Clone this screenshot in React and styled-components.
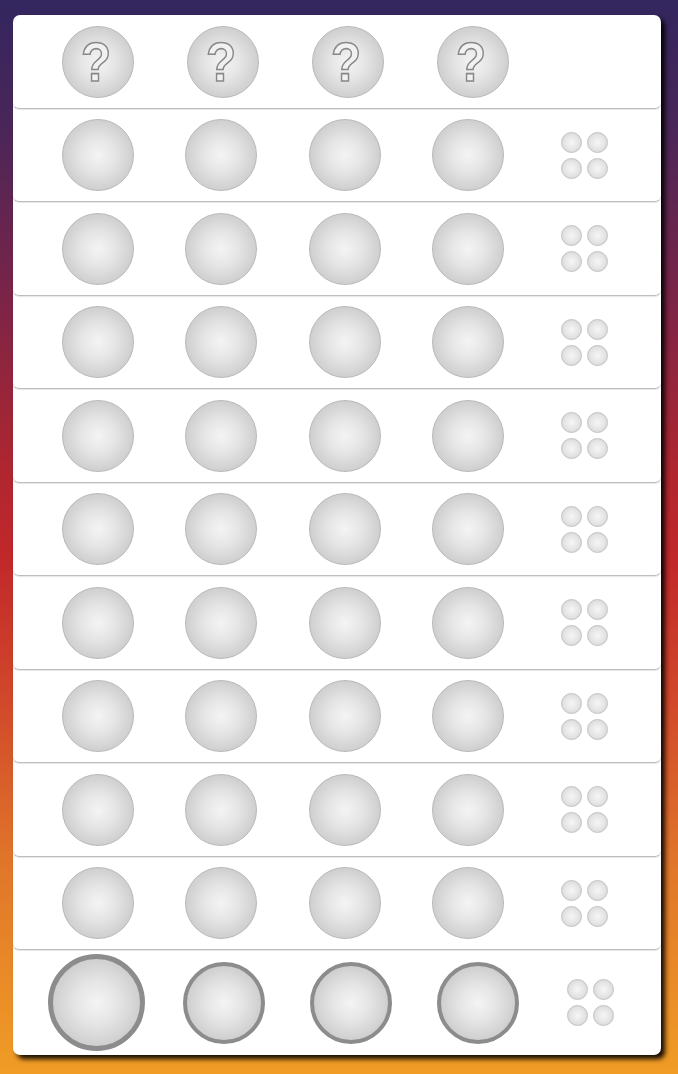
import React from 'react'
import styled, { createGlobalStyle } from 'styled-components'

const GlobalStyle = createGlobalStyle`
html, body {
  margin: 0;
  padding: 0;
}
body {
  font-family: "Liberation Sans", sans-serif;
}
`

const Page = styled.div`
min-height: 100vh;
box-sizing: border-box;
padding: 15px 17px 19px 13px;
background: linear-gradient(
  to bottom,
  #33265f 0%,
  #4a2658 12%,
  #7c2447 28%,
  #b0262f 44%,
  #c1282a 52%,
  #d24a2a 66%,
  #e0752a 80%,
  #f09c25 100%
);
`

const Board = styled.div`
width: 648px;
height: 1040px;
background: #fff;
border-radius: 7px;
box-shadow: 4px 4px 5px rgba(0, 0, 0, 0.92);
display: flex;
flex-direction: column;
overflow: hidden;
`

const Row = styled.div`
box-sizing: border-box;
height: ${(p) => p.$height}px;
display: grid;
grid-template-columns: repeat(4, ${(p) => p.$col}px) 1fr;
padding-left: ${(p) => p.$pad}px;
padding-right: 22px;
align-items: center;
justify-items: center;
border-bottom: ${(p) => (p.$last ? 'none' : '1px solid #bdbdbd')};
border-radius: 0 0 6px 6px;
box-shadow: ${(p) => (p.$last ? 'none' : '0 1px 1px rgba(0,0,0,0.1)')};
flex-shrink: 0;
`

const Ball = styled.div`
position: relative;
box-sizing: border-box;
width: ${(p) => p.$size}px;
height: ${(p) => p.$size}px;
border-radius: 50%;
background: radial-gradient(circle at 50% 50%, #f4f4f4 0%, #e5e5e5 35%, #cecece 72%, #bbbbbb 100%);
border: ${(p) => (p.$ring ? `${p.$ring}px solid #8c8c8c` : '1px solid #b8b8b8')};
display: flex;
align-items: center;
justify-content: center;
`

const Question = styled.span`
font-family: "Liberation Sans", sans-serif;
font-weight: bold;
font-size: 56px;
line-height: 1;
color: #f1f1f1;
-webkit-text-stroke: 1.6px #888;
margin-left: -3px;
transform: scaleX(0.88);
`

const Pegs = styled.div`
display: grid;
grid-template-columns: repeat(2, 21px);
grid-template-rows: repeat(2, 21px);
gap: 5px;
`

const Peg = styled.div`
box-sizing: border-box;
width: 21px;
height: 21px;
border-radius: 50%;
border: 1px solid #c2c2c2;
background: radial-gradient(circle at 50% 50%, #f6f6f6 0%, #e4e4e4 55%, #c9c9c9 100%);
`

const PegBox = () => (
  <Pegs>
    <Peg />
    <Peg />
    <Peg />
    <Peg />
  </Pegs>
)

const guessRows = Array.from({ length: 9 })

export default function App() {
  return (
    <Page>
      <GlobalStyle />
      <Board>
        <Row $height={94} $col={125} $pad={22}>
          {[0, 1, 2, 3].map((i) => (
            <Ball key={i} $size={72}>
              <Question>?</Question>
            </Ball>
          ))}
          <div />
        </Row>
        {guessRows.map((_, r) => (
          <Row key={r} $height={r % 2 === 0 ? 93 : 94} $col={123.5} $pad={23}>
            <Ball $size={72} />
            <Ball $size={72} />
            <Ball $size={72} />
            <Ball $size={72} />
            <PegBox />
          </Row>
        ))}
        <Row $height={105} $col={127} $pad={20} $last>
          <Ball $size={97} $ring={5} />
          <Ball $size={82} $ring={4} />
          <Ball $size={82} $ring={4} />
          <Ball $size={82} $ring={4} />
          <PegBox />
        </Row>
      </Board>
    </Page>
  )
}
